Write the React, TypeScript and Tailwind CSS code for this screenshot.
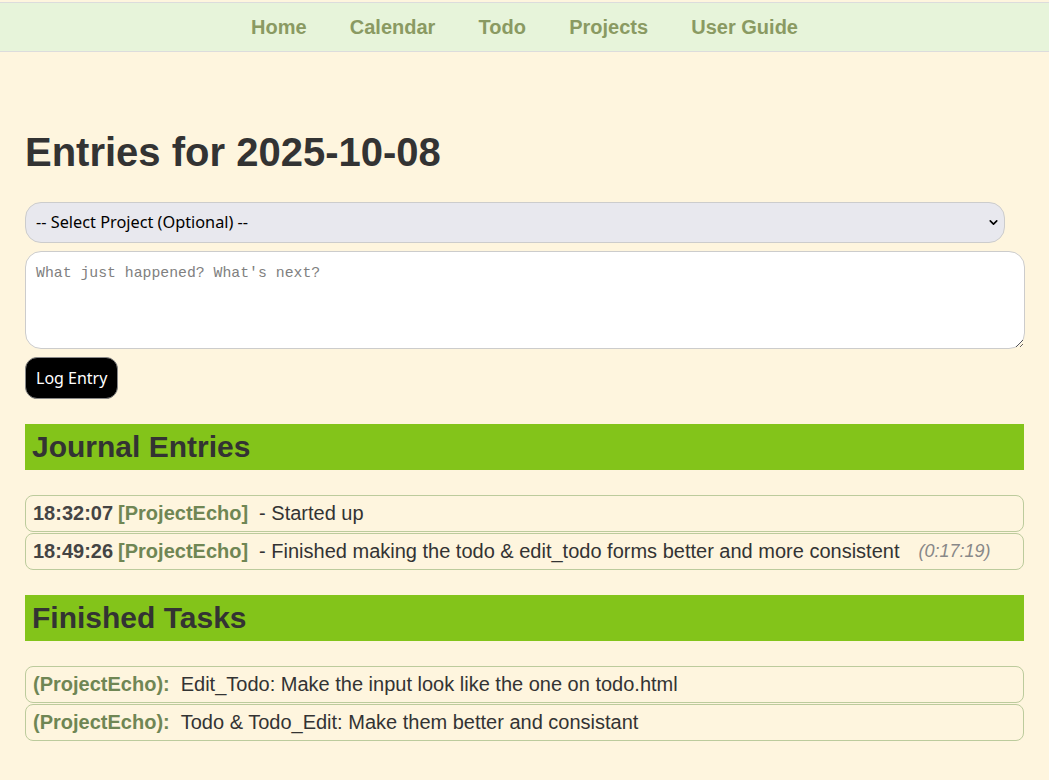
import { ChevronDown } from 'lucide-react';

type Entry = {
  time: string;
  project: string;
  text: string;
  duration?: string;
};

type Task = {
  project: string;
  text: string;
};

const NAV_LINKS = ['Home', 'Calendar', 'Todo', 'Projects', 'User Guide'];

const ENTRIES: Entry[] = [
  { time: '18:32:07', project: 'ProjectEcho', text: 'Started up' },
  {
    time: '18:49:26',
    project: 'ProjectEcho',
    text: 'Finished making the todo & edit_todo forms better and more consistent',
    duration: '(0:17:19)',
  },
];

const TASKS: Task[] = [
  {
    project: 'ProjectEcho',
    text: 'Edit_Todo: Make the input look like the one on todo.html',
  },
  {
    project: 'ProjectEcho',
    text: 'Todo & Todo_Edit: Make them better and consistant',
  },
];

function SectionHeader({ title }: { title: string }) {
  return (
    <h2 className="mt-[25px] bg-[#83c41a] px-[7px] py-[6px] text-[30px] font-bold leading-[34px] text-[#333]">
      {title}
    </h2>
  );
}

export default function App() {
  return (
    <div className="min-h-[780px] bg-[#fef5de] pt-[2px] font-['Liberation_Sans',Arial,sans-serif] text-[#333]">
      <nav className="flex h-[50px] items-center justify-center border-y border-[#dcdcdc] bg-[#e7f4da]">
        {NAV_LINKS.map((link) => (
          <a
            className="px-[21.6px] text-[20px] font-bold text-[#8a9a62]"
            href="#"
            key={link}
          >
            {link}
          </a>
        ))}
      </nav>

      <main className="px-[25px] pt-[77px]">
        <h1 className="text-[40px] font-bold leading-[46px] text-[#333]">
          Entries for 2025-10-08
        </h1>

        <div className="relative mt-[27px] w-[980px]">
          <select className="h-[41px] w-full appearance-none rounded-[16px] border border-[#ccc] bg-[#e8e8ee] px-[10px] font-['Noto_Sans',sans-serif] text-[16.3px] text-black outline-none">
            <option>-- Select Project (Optional) --</option>
          </select>
          <ChevronDown
            className="pointer-events-none absolute top-[14px] right-[5px] text-black"
            size={13}
            strokeWidth={3}
          />
        </div>

        <textarea
          className="mt-[8px] block h-[98px] w-[1000px] rounded-[16px] border border-[#ccc] bg-white px-[10px] pt-[12px] pb-[8px] font-['Liberation_Mono',monospace] text-[14.8px] leading-[18px] outline-none placeholder:text-[#808080]"
          placeholder="What just happened? What's next?"
        />

        <button
          className="mt-[8px] block h-[42px] rounded-[12px] border border-[#888] bg-black px-[10px] font-['Noto_Sans',sans-serif] text-[16px] text-white"
          type="button"
        >
          Log Entry
        </button>

        <SectionHeader title="Journal Entries" />

        <div className="mt-[25px] flex flex-col gap-[1px]">
          {ENTRIES.map((entry) => (
            <div
              className="flex items-center rounded-[8px] border border-[#bccb9c] px-[7px] py-[6px] text-[20px] leading-[23px]"
              key={entry.time}
            >
              <span className="font-bold text-[#444]">{entry.time}</span>
              <span className="ml-[5px] font-bold text-[#6f8654]">
                [{entry.project}]
              </span>
              <span className="ml-[11px]">- {entry.text}</span>
              {entry.duration && (
                <span className="ml-[19px] text-[18px] text-[#888] italic">
                  {entry.duration}
                </span>
              )}
            </div>
          ))}
        </div>

        <SectionHeader title="Finished Tasks" />

        <div className="mt-[25px] flex flex-col gap-[1px]">
          {TASKS.map((task) => (
            <div
              className="flex items-center rounded-[8px] border border-[#bccb9c] px-[7px] py-[6px] text-[20px] leading-[23px]"
              key={task.text}
            >
              <span className="font-bold text-[#6f8654]">
                ({task.project}):
              </span>
              <span className="ml-[11px]">{task.text}</span>
            </div>
          ))}
        </div>
      </main>
    </div>
  );
}
